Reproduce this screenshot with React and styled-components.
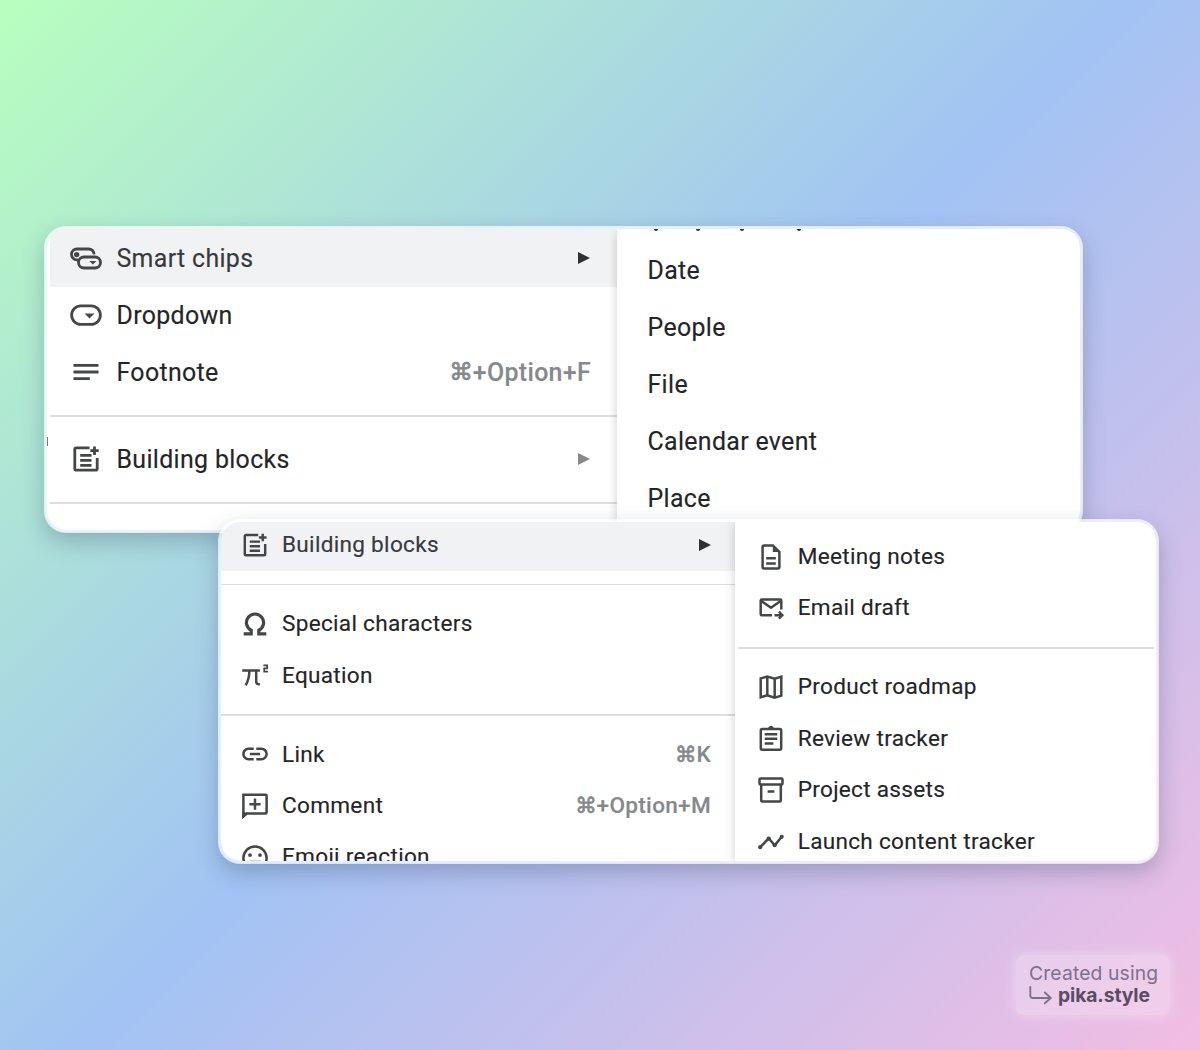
import React from "react";
import styled, { createGlobalStyle } from "styled-components";

const GlobalStyle = createGlobalStyle`
  *, *::before, *::after { box-sizing: border-box; }
  body { margin: 0; font-family: Roboto, "Liberation Sans", sans-serif; }
`;

const Canvas = styled.main`
  position: relative;
  width: 1200px;
  height: 1050px;
  overflow: hidden;
  padding: 226px 0 0 44px;
  background: linear-gradient(135deg, #b8ffbe 0%, #a2c3f4 50%, #f2bde3 100%);
`;

const Card = styled.section`
  position: relative;
  display: flex;
  overflow: hidden;
  width: ${(p) => p.$width}px;
  height: ${(p) => p.$height}px;
  margin: ${(p) => p.$margin || "0"};
  border: 3px solid rgba(255, 255, 255, 0.7);
  border-radius: 22px;
  background: #fff;
  background-clip: padding-box;
  box-shadow: 0 9px 22px rgba(40, 50, 80, 0.26);
  font-size: ${(p) => p.$font}px;
  letter-spacing: ${(p) => p.$spacing}px;
  --row: ${(p) => p.$row}px;
`;

const Menu = styled.div`
  display: flex;
  flex-direction: column;
  flex: none;
  width: ${(p) => p.$width}px;
  padding-left: ${(p) => p.$inset}px;
`;

const Submenu = styled.div`
  position: relative;
  display: flex;
  flex-direction: column;
  flex: 1;
  padding-top: ${(p) => p.$top}px;
  background: #fff;
  border-top-left-radius: ${(p) => p.$radius || 0}px;
  box-shadow: -1px 2px 9px rgba(0, 0, 0, 0.17);
`;

const Row = styled.div`
  display: flex;
  flex: none;
  align-items: center;
  height: ${(p) => (p.$height ? p.$height + "px" : "var(--row)")};
  padding: 0 ${(p) => p.$right || 0}px ${(p) => p.$lift || 0}px ${(p) => p.$left}px;
  color: ${(p) => (p.$active ? "#38393c" : "#242527")};
  background: ${(p) => (p.$active ? "#f1f2f4" : "transparent")};
  -webkit-text-stroke: 0.15px currentColor;
  white-space: nowrap;
`;

const Label = styled.span`
  flex: 1;
  padding-top: ${(p) => p.$drop || 0}px;
  line-height: 1;
`;

const Shortcut = styled.span`
  display: flex;
  align-items: center;
  padding-top: ${(p) => p.$drop || 0}px;
  color: #85898c;
  font-weight: 500;
  line-height: 1;
`;

const Command = styled.span`
  font-family: "DejaVu Sans", sans-serif;
  font-size: 0.95em;
  letter-spacing: 0;
  -webkit-text-stroke: 0.7px currentColor;
`;

const Arrow = styled.i`
  width: 0;
  height: 0;
  border-style: solid;
  border-width: 6px 0 6px 12.5px;
  border-color: transparent transparent transparent ${(p) => p.$color || "#303134"};
`;

const Divider = styled.hr`
  flex: none;
  height: 1.5px;
  margin: ${(p) => p.$margin};
  border: 0;
  background: #dcdee0;
`;

const Glyph = styled.svg`
  flex: none;
  width: ${(p) => p.$size}px;
  height: ${(p) => p.$size}px;
  margin-right: ${(p) => p.$gap}px;
  color: #444746;
`;

const Cutoff = styled.div`
  position: absolute;
  top: 0;
  left: 37px;
  display: flex;
`;

const Tip = styled.i`
  width: 4px;
  height: 2px;
  margin-right: ${(p) => p.$after || 0}px;
  border-radius: 0 0 2px 2px;
  background: #2b2b2b;
`;

const EdgeMark = styled.i`
  position: absolute;
  top: 208px;
  left: -1px;
  width: 2px;
  height: 9px;
  background: #777c7f;
`;

const Badge = styled.footer`
  position: absolute;
  left: 1016px;
  top: 955px;
  width: 154px;
  height: 60px;
  padding: 8px 0 0 13px;
  border-radius: 8px;
  background: rgba(255, 255, 255, 0.25);
  box-shadow: 0 0 12px 2px rgba(255, 255, 255, 0.28);
  color: #80708b;
  font-family: Inter, sans-serif;
  font-size: 19.3px;
`;

const BadgeLine = styled.div`
  display: flex;
  align-items: center;
  gap: 5px;
  height: 22px;
  letter-spacing: ${(p) => p.$spacing || 0}px;
  line-height: 1;
  white-space: nowrap;
`;

const Brand = styled.strong`
  color: #5b4c66;
  font-weight: 700;
`;

const ReturnArrow = styled.svg`
  width: 24px;
  height: 20px;
`;

const block = (
  <>
    <path d="M3.5 -11.1H-9.8Q-11.2 -11.1 -11.2 -9.7V9.8Q-11.2 11.2 -9.8 11.2H9.8Q11.2 11.2 11.2 9.8V-1" />
    <path d="M8.5 -12.5V-4.1M4.3 -8.3H12.7M-5.8 -3.7H5.5M-5.8 1.3H5.5M-5.8 6.3H5.5" />
  </>
);

const ICONS = {
  chips: (
    <>
      <path d="M-8 1.8H-9.1A5.4 5.4 0 0 1 -9.1 -9H2.6Q7.4 -9 8.2 -3.6" />
      <rect x="-7.5" y="-1" width="22" height="11" rx="5.5" />
      <circle cx="-9.3" cy="-3.4" r="2.7" fill="currentColor" stroke="none" />
      <path d="M3.4 3.1H10.4L6.9 6.6Z" fill="currentColor" stroke="none" />
    </>
  ),
  dropdown: (
    <>
      <rect x="-14.4" y="-9.2" width="28.8" height="18.6" rx="9.3" />
      <path d="M-1.4 -1.5H8.4L3.5 3.5Z" fill="currentColor" stroke="none" />
    </>
  ),
  footnote: <path d="M-12.5 -6.7H12.5M-12.5 0H12.5M-12.5 6.7H3.8" />,
  block,
  blockSmall: <g transform="scale(.91)" strokeWidth="2.7">{block}</g>,
  omega: <path strokeWidth="3.2" d="M-11.3 9.9H-3.8V6.3A8.6 8.6 0 1 1 3.8 6.3V9.9H11.3" />,
  equation: (
    <>
      <path d="M-12.8 -4.6H4.9M-5.6 -4.6C-5.7 1 -7 6.5 -9.4 10.2M1.2 -4.6V6.5Q1.2 9.6 4.9 9.1" />
      <path strokeWidth="1.7" d="M8.4 -9.6H12.2V-6.6H9.2V-3.4H13" />
    </>
  ),
  link: (
    <path
      transform="scale(1.28) translate(-12 -12)"
      fill="currentColor"
      stroke="none"
      d="M3.9 12c0-1.71 1.39-3.1 3.1-3.1h4V7H7c-2.76 0-5 2.24-5 5s2.24 5 5 5h4v-1.9H7c-1.71 0-3.1-1.39-3.1-3.1zM8 13h8v-2H8v2zm9-6h-4v1.9h4c1.71 0 3.1 1.39 3.1 3.1s-1.39 3.1-3.1 3.1h-4V17h4c2.76 0 5-2.24 5-5s-2.24-5-5-5z"
    />
  ),
  comment: (
    <>
      <path d="M-11.6 -11.2H10.6Q11.6 -11.2 11.6 -10.2V6.4Q11.6 7.6 10.4 7.6H-8.2L-11.6 10.6Z" />
      <path d="M-12.7 6V12.8L-6.5 7Z" fill="currentColor" stroke="none" />
      <path d="M0 -7.4V3.8M-5.6 -1.8H5.6" />
    </>
  ),
  emoji: (
    <>
      <circle r="11.6" />
      <circle cx="-5" cy="-2.9" r="1.9" fill="currentColor" stroke="none" />
      <circle cx="5" cy="-2.9" r="1.9" fill="currentColor" stroke="none" />
      <path d="M-5.8 2.8H5.8Q4 8.5 0 8.5T-5.8 2.8Z" fill="currentColor" stroke="none" />
    </>
  ),
  document: (
    <>
      <path d="M1.8 -11.6H-6.9Q-8.4 -11.6 -8.4 -10.1V10Q-8.4 11.5 -6.9 11.5H6.9Q8.4 11.5 8.4 10V-5Z" />
      <path d="M1.8 -12V-5H8.6Z" fill="currentColor" stroke="none" />
      <path d="M-4.8 1.3H4.8M-4.8 6.5H4.8" />
    </>
  ),
  email: (
    <>
      <path d="M10.3 1.4V-7.6Q10.3 -8.6 9.3 -8.6H-9.3Q-10.3 -8.6 -10.3 -7.6V6.3Q-10.3 7.3 -9.3 7.3H1" />
      <path d="M-10 -7.2L0 -.3L10 -7.2M3.5 7.2H11M7.9 3.7L11.3 7.2L7.9 10.7" />
    </>
  ),
  map: <path d="M-10.3 -8.6L-3.7 -10.5L3.7 -8.3L10.3 -10.4V8.6L3.7 10.6L-3.7 8.3L-10.3 10.3ZM-3.7 -10.5V8.3M3.7 -8.3V10.6" />,
  clipboard: (
    <>
      <rect x="-10.2" y="-10" width="20.4" height="20.7" rx="1.4" />
      <path d="M-4.6 -9.8Q-3.6 -10.6 -3 -11Q0 -15.4 3 -11Q3.6 -10.6 4.6 -9.8Z" fill="currentColor" stroke="none" />
      <path d="M-6.3 -4.7H6.3M-6.3 -.2H6.3M-6.3 4.4H2.4" />
    </>
  ),
  archive: (
    <>
      <rect x="-11.5" y="-11.5" width="23" height="6" rx="1" />
      <path d="M-9.8 -5V10.4Q-9.8 11.4 -8.8 11.4H8.8Q9.8 11.4 9.8 10.4V-5M-3.4 1.4H3.4" />
    </>
  ),
  timeline: (
    <>
      <path strokeLinejoin="round" d="M-10.8 5.2L-2.3 -3.7L3.7 3.4L10.7 -5.2" />
      <circle cx="-10.8" cy="5.2" r="2.1" fill="currentColor" stroke="none" />
      <circle cx="-2.3" cy="-3.4" r="2.1" fill="currentColor" stroke="none" />
      <circle cx="3.7" cy="3.2" r="2.1" fill="currentColor" stroke="none" />
      <circle cx="10.7" cy="-5.2" r="2.1" fill="currentColor" stroke="none" />
    </>
  ),
};

function Icon({ name, size = 34, gap = 12.5, weight = 2.5 }) {
  const h = size / 2;
  return (
    <Glyph $size={size} $gap={gap} viewBox={`${-h} ${-h} ${size} ${size}`} fill="none" stroke="currentColor" strokeWidth={weight} aria-hidden="true">
      {ICONS[name]}
    </Glyph>
  );
}

function Item({ icon, label, keys, arrow, active, height, lift, drop, left, right, weight, gap }) {
  return (
    <Row $active={active} $height={height} $lift={lift} $left={left} $right={right}>
      {icon && <Icon name={icon} weight={weight} gap={gap} />}
      <Label $drop={drop}>{label}</Label>
      {keys && (
        <Shortcut $drop={drop}>
          <Command>⌘</Command>
          {keys}
        </Shortcut>
      )}
      {arrow && <Arrow $color={arrow} />}
    </Row>
  );
}

export default function App() {
  const a = { left: 19, right: 27.5, weight: 2.8, gap: 13.5, drop: 2 };
  const b = { left: 16.8, right: 24, gap: 10.2 };
  const c = { left: 18.8, gap: 9.9, drop: 0.5 };
  return (
    <>
      <GlobalStyle />
      <Canvas>
        <Card $width={1038.5} $height={307} $font={24.9} $spacing={0.34} $row={56.8}>
          <Menu $width={570} $inset={3}>
            <Item {...a} icon="chips" label="Smart chips" arrow="#303134" active height={58} />
            <Item {...a} icon="dropdown" label="Dropdown" />
            <Item {...a} icon="footnote" label="Footnote" keys="+Option+F" right={26} />
            <Divider $margin="14.5px 0" />
            <Item {...a} icon="block" label="Building blocks" arrow="#85898c" />
            <Divider $margin="14.5px 0" />
          </Menu>
          <Submenu $top={14} $radius={8}>
            <Cutoff>
              <Tip $after={38} />
              <Tip $after={40} />
              <Tip $after={53} />
              <Tip />
            </Cutoff>
            {["Date", "People", "File", "Calendar event", "Place"].map((label) => (
              <Item key={label} label={label} left={30.5} drop={1} />
            ))}
          </Submenu>
          <EdgeMark />
        </Card>
        <Card $width={941} $height={345} $margin="-14px 0 0 174px" $font={22.6} $spacing={0.29} $row={51.6}>
          <Menu $width={514} $inset={0}>
            <Item {...b} icon="blockSmall" label="Building blocks" arrow="#303134" active height={49} lift={3} />
            <Divider $margin="12.5px 0 13px" />
            <Item {...b} icon="omega" label="Special characters" />
            <Item {...b} icon="equation" label="Equation" drop={1} />
            <Divider $margin="13px 0" />
            <Item {...b} icon="link" label="Link" keys="K" drop={1} />
            <Item {...b} icon="comment" label="Comment" keys="+Option+M" />
            <Item {...b} icon="emoji" label="Emoji reaction" />
          </Menu>
          <Submenu $top={9}>
            <Item {...c} icon="document" label="Meeting notes" />
            <Item {...c} icon="email" label="Email draft" />
            <Divider $margin="13px 2px 12.5px 3px" />
            <Item {...c} icon="map" label="Product roadmap" />
            <Item {...c} icon="clipboard" label="Review tracker" />
            <Item {...c} icon="archive" label="Project assets" />
            <Item {...c} icon="timeline" label="Launch content tracker" />
          </Submenu>
        </Card>
        <Badge>
          <BadgeLine $spacing={0.15}>Created using</BadgeLine>
          <BadgeLine $spacing={-0.1}>
            <ReturnArrow viewBox="0 0 24 20" fill="none" stroke="currentColor" strokeWidth="1.9" strokeLinecap="round" strokeLinejoin="round" aria-hidden="true">
              <path d="M1.3 1V9.5Q1.3 12 3.8 12H21.5M15.8 6.5L21.8 12L15.8 17.3" />
            </ReturnArrow>
            <Brand>pika.style</Brand>
          </BadgeLine>
        </Badge>
      </Canvas>
    </>
  );
}
